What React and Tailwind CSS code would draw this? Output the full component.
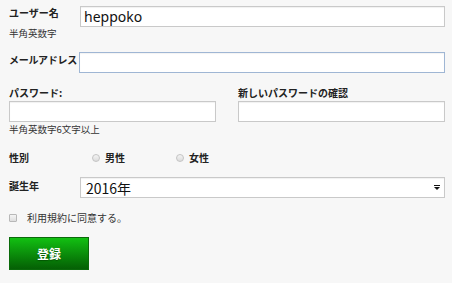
import React from "react";

const jp = { fontFamily: '"Noto Sans CJK JP", "Noto Sans", sans-serif' };

function Radio({ label, className = "" }) {
  return (
    <div className={"flex items-center " + className}>
      <span className="w-[8px] h-[8px] rounded-full border border-[#c4c4c4] bg-gradient-to-b from-[#f4f4f4] to-[#dcdcdc]" />
      <span className="ml-[5px] text-[10px] font-bold leading-[14px] text-[#222]">{label}</span>
    </div>
  );
}

export default function App() {
  const inputCls =
    "h-[21px] bg-white border border-[#c9c9c9] shadow-[inset_0_1px_1px_rgba(0,0,0,0.06)]";
  return (
    <div className="w-[452px] h-[283px] bg-[#f7f7f7] overflow-hidden pl-[9px] text-[#222]" style={jp}>
      {/* username */}
      <div className="flex pt-[6px]">
        <div className="w-[71px]">
          <div className="text-[10px] font-bold leading-[14px]">ユーザー名</div>
          <div className="text-[9.5px] leading-[13px] mt-[7px] text-[#333]">半角英数字</div>
        </div>
        <div className={inputCls + " w-[365px] flex items-center pl-[3px]"}>
          <span className="text-[14px] leading-[18px] text-[#111]" style={{ fontFamily: '"Noto Sans", "Open Sans", sans-serif' }}>heppoko</span>
        </div>
      </div>

      {/* email */}
      <div className="flex mt-[12px]">
        <div className="w-[70px] text-[10px] font-bold leading-[14px] mt-[1px] whitespace-nowrap tracking-[-0.3px]">メールアドレス</div>
        <div className="h-[21px] w-[366px] bg-white border border-[#9fb6d4] shadow-[inset_0_1px_1px_rgba(0,0,0,0.05)]" />
      </div>

      {/* passwords */}
      <div className="flex mt-[13px]">
        <div className="w-[207px]">
          <div className="text-[10px] font-bold leading-[14px]">パスワード:</div>
          <div className={inputCls + " w-[207px] mt-[1px]"} />
          <div className="text-[9.5px] leading-[13px] mt-[1px] text-[#333]">半角英数字6文字以上</div>
        </div>
        <div className="w-[207px] ml-[22px]">
          <div className="text-[10px] font-bold leading-[14px]">新しいパスワードの確認</div>
          <div className={inputCls + " w-[207px] mt-[1px]"} />
        </div>
      </div>

      {/* gender */}
      <div className="flex items-center mt-[15px] h-[14px]">
        <div className="w-[83px] text-[10px] font-bold leading-[14px]">性別</div>
        <Radio label="男性" className="w-[84px]" />
        <Radio label="女性" />
      </div>

      {/* birth year */}
      <div className="flex mt-[12px]">
        <div className="w-[71px] text-[10px] font-bold leading-[14px] mt-[2px]">誕生年</div>
        <div className={inputCls + " w-[365px] flex items-center justify-between pl-[5px] pr-[4px]"}>
          <span className="text-[14px] leading-[18px] text-[#111]" style={jp}>2016年</span>
          <svg width="6" height="6" viewBox="0 0 6 6">
            <rect x="0" y="0" width="6" height="1" fill="#111" />
            <polygon points="0,2 6,2 3,5" fill="#111" />
          </svg>
        </div>
      </div>

      {/* terms */}
      <div className="flex items-center mt-[13px] h-[14px]">
        <span className="w-[8px] h-[8px] border border-[#b8b8b8] bg-gradient-to-b from-[#f4f4f4] to-[#dedede] rounded-[1px]" />
        <span className="ml-[10px] text-[10px] leading-[14px] text-[#333]">利用規約に同意する。</span>
      </div>

      {/* submit */}
      <button
        className="mt-[12px] w-[80px] h-[33px] border border-[#0a6a0a] bg-gradient-to-b from-[#12c012] to-[#056005] flex items-center justify-center"
        style={jp}
      >
        <span className="text-[12px] font-bold text-white [text-shadow:0_1px_1px_rgba(0,60,0,0.6)]">登録</span>
      </button>
    </div>
  );
}
